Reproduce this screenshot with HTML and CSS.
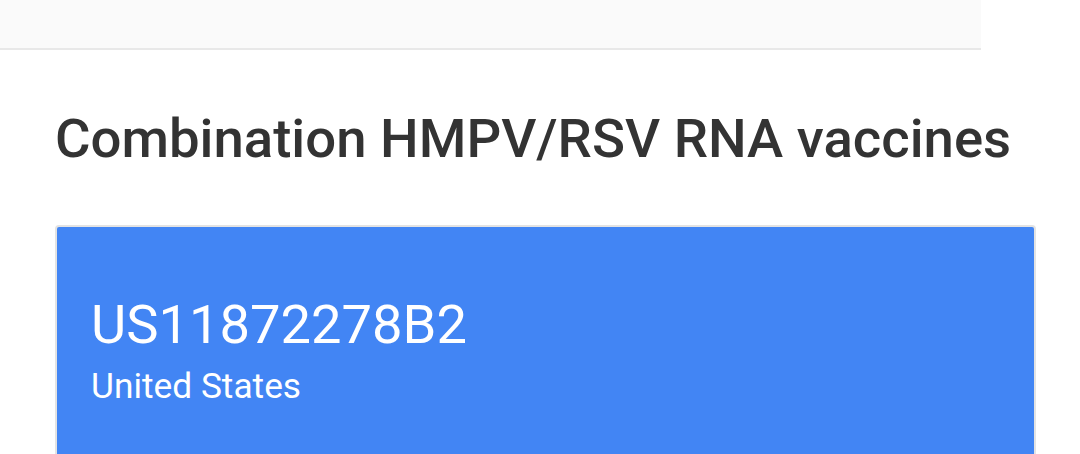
FILE: index.html
```html
<!DOCTYPE html>
<html>
<head>
<meta charset="utf-8">
<link rel="stylesheet" href="styles.css">
</head>
<body>
<div class="topbar"></div>
<main class="content">
  <h1 class="title">Combination HMPV/RSV RNA vaccines</h1>
  <div class="card">
    <div class="card-id">US11872278B2</div>
    <div class="card-country">United States</div>
  </div>
</main>
</body>
</html>
```

FILE: styles.css
```css
html, body {
  margin: 0;
  padding: 0;
  background: #ffffff;
  font-family: Roboto, "Liberation Sans", sans-serif;
  overflow: hidden;
}
.topbar {
  width: 981px;
  height: 48px;
  background: #fafafa;
  border-bottom: 2px solid #e8e8e8;
}
.content {
  padding: 0 44px 0 55px;
}
.title {
  margin: 0;
  padding-top: 58px;
  font-size: 54.5px;
  line-height: 60px;
  font-weight: 500;
  color: #333333;
  white-space: nowrap;
}
.card {
  margin-top: 57px;
  background: #4285f4;
  border: 2px solid #e3e3e3;
  border-radius: 4px;
  padding: 66px 34px 60px 34px;
  color: #ffffff;
}
.card-id {
  font-size: 54.3px;
  line-height: 64px;
  font-weight: 400;
}
.card-country {
  margin-top: 6px;
  font-size: 35.3px;
  line-height: 46px;
}
```
